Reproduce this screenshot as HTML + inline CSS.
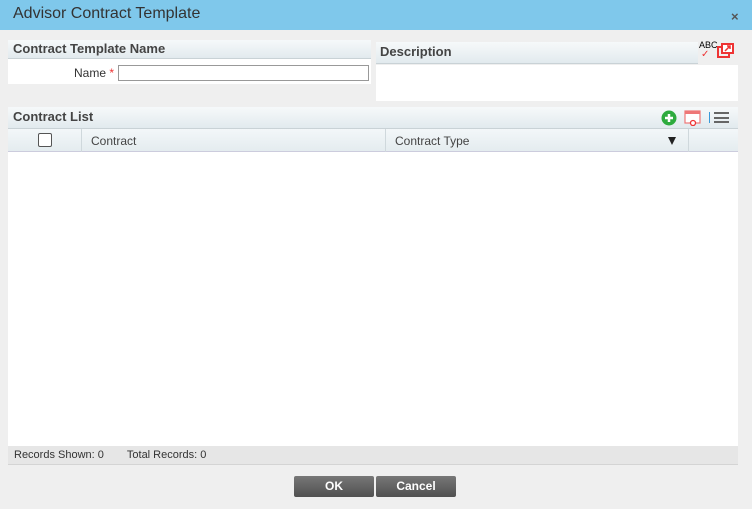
<!DOCTYPE html>
<html><head><style>
*{box-sizing:border-box;margin:0;padding:0}
body{width:752px;height:509px;background:#efefef;font-family:"Liberation Sans",sans-serif;position:relative;overflow:hidden;color:#333}
.abs{position:absolute}
.title{left:0;top:0;width:752px;height:30px;background:#7fc8eb;font-size:16px;color:#333;padding:5px 0 0 13px}
.hdr{background:linear-gradient(#f6f9fa,#e2eaee);border-bottom:1px solid #c9d2d6;font-weight:bold;font-size:13px;color:#444}
.white{background:#fff}
.btn{background:linear-gradient(#777,#505050);color:#fff;font-weight:bold;font-size:12px;text-align:center;line-height:21px;border-radius:2px}
</style></head><body>
<div class="abs title">Advisor Contract Template</div>
<div class="abs" style="left:731px;top:9px;font-size:13px;font-weight:bold;color:#555">×</div>

<div class="abs hdr" style="left:8px;top:40px;width:363px;height:19px;padding:1px 0 0 5px">Contract Template Name</div>
<div class="abs white" style="left:8px;top:59px;width:363px;height:25px"></div>
<div class="abs" style="left:74px;top:66px;font-size:12px;color:#333">Name <span style="color:#e33">*</span></div>
<div class="abs" style="left:118px;top:65px;width:251px;height:16px;border:1px solid #999;background:#fff"></div>

<div class="abs hdr" style="left:376px;top:42px;width:322px;height:22px;padding:2px 0 0 4px">Description</div>
<div class="abs white" style="left:376px;top:65px;width:362px;height:36px"></div>
<div class="abs" style="left:699px;top:41px;font-size:9px;color:#000;line-height:9px">ABC</div>
<div class="abs" style="left:701px;top:50px;color:#e33;font-size:10px;line-height:9px">✓</div>
<svg class="abs" style="left:717px;top:43px" width="17" height="16"><rect x="1" y="4" width="11" height="10" fill="none" stroke="#e33" stroke-width="2"/><rect x="5" y="1" width="11" height="9" fill="#fff" stroke="#e33" stroke-width="2"/><path d="M8 8 L13 3 M10 3h3v3" stroke="#e33" stroke-width="1.5" fill="none"/></svg>

<div class="abs hdr" style="left:8px;top:107px;width:730px;height:22px;padding:2px 0 0 5px">Contract List</div>
<svg class="abs" style="left:661px;top:110px" width="16" height="16"><circle cx="8" cy="8" r="7.5" fill="#2eab3e"/><path d="M8 4v8M4 8h8" stroke="#fff" stroke-width="2.5"/></svg>
<svg class="abs" style="left:684px;top:109px" width="18" height="17"><rect x="1" y="2" width="15" height="12" fill="#fff" stroke="#e77" stroke-width="1.2"/><rect x="1" y="2" width="15" height="3" fill="#e77"/><circle cx="9" cy="14" r="2.5" fill="#fff" stroke="#e33" stroke-width="1.3"/></svg>
<div class="abs" style="left:709px;top:112px;width:1px;height:11px;background:#3a9ad9"></div>
<div class="abs" style="left:714px;top:112px;width:15px;height:11px;border-top:2px solid #666;border-bottom:2px solid #666"><div style="margin-top:2.5px;height:2px;background:#666"></div></div>

<div class="abs" style="left:8px;top:129px;width:730px;height:23px;background:linear-gradient(#f3f7f9,#e4ecef);border-bottom:1px solid #ccd"></div>
<div class="abs" style="left:38px;top:133px;width:14px;height:14px;border:1px solid #555;border-radius:2px;background:#fff"></div>
<div class="abs" style="left:81px;top:129px;width:1px;height:23px;background:#cfd8dc"></div>
<div class="abs" style="left:385px;top:129px;width:1px;height:23px;background:#cfd8dc"></div>
<div class="abs" style="left:688px;top:129px;width:1px;height:23px;background:#cfd8dc"></div>
<div class="abs" style="left:91px;top:134px;font-size:12px;color:#444">Contract</div>
<div class="abs" style="left:395px;top:134px;font-size:12px;color:#444">Contract Type</div>
<div class="abs" style="left:668px;top:137px;width:0;height:0;border-left:4.5px solid transparent;border-right:4.5px solid transparent;border-top:8px solid #222"></div>

<div class="abs white" style="left:8px;top:152px;width:730px;height:294px"></div>
<div class="abs" style="left:8px;top:446px;width:730px;height:19px;background:#e6e6e6;border-bottom:1px solid #d4d4d4;font-size:11px;color:#333;padding:3px 0 0 6px">Records Shown: 0<span style="margin-left:23px">Total Records: 0</span></div>

<div class="abs btn" style="left:294px;top:476px;width:80px;height:21px">OK</div>
<div class="abs btn" style="left:376px;top:476px;width:80px;height:21px">Cancel</div>
</body></html>
